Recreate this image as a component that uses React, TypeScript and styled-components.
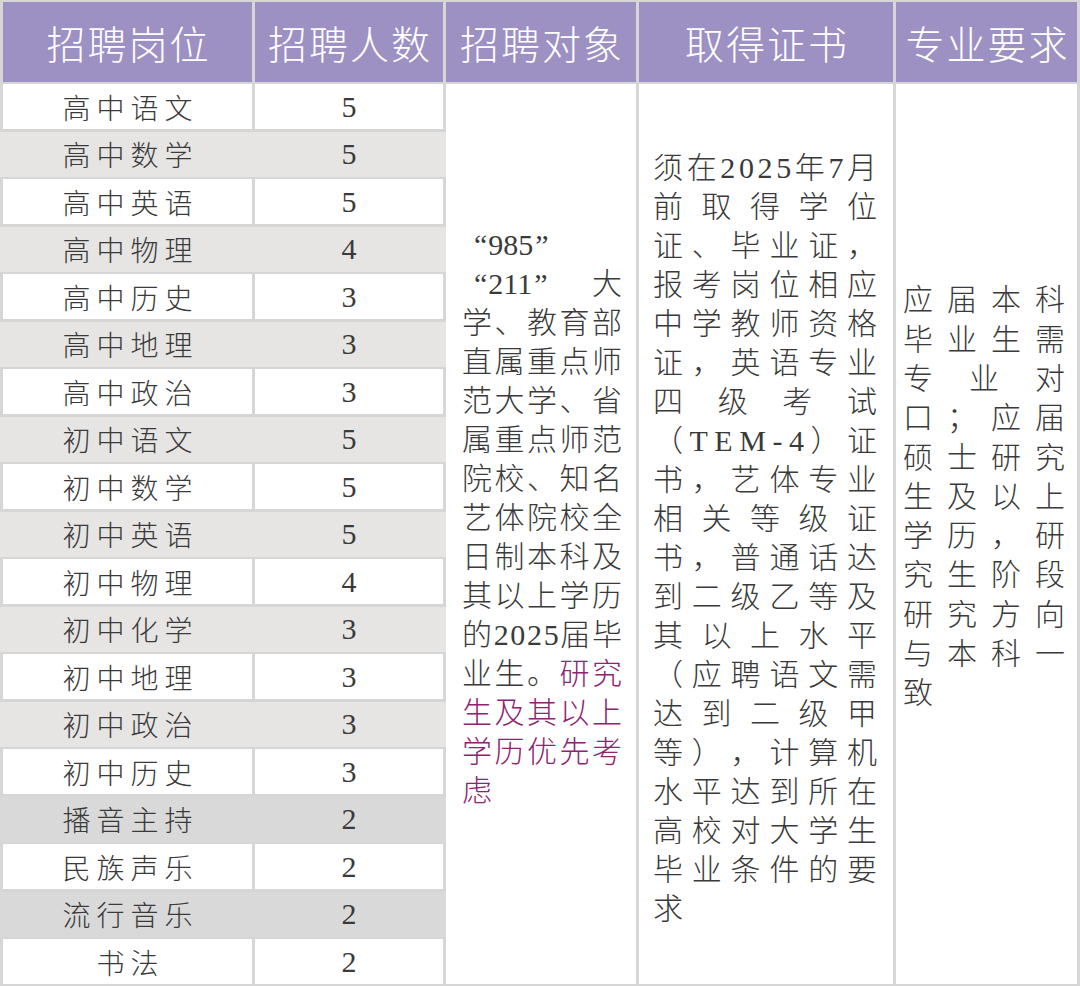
import type { ReactNode } from "react";
import styled, { createGlobalStyle } from "styled-components";

const GlobalStyle = createGlobalStyle`
  *, *::before, *::after { box-sizing: border-box; }
  html, body { margin: 0; padding: 0; background: #ffffff; }
  body {
    font-family: "Liberation Serif", "Noto Sans CJK SC", serif;
    color: #3a3a3a;
  }
`

const COLS = [249, 188, 190, 254, 181]

const Sheet = styled.div`
    width: 1080px;
    height: 986px;
    background: #d6d6d6;
    display: flex;
    flex-direction: column;
`

const HeadRow = styled.div`
    display: flex;
    padding: 2px 0 2px 3px;
`

const HeadCell = styled.div<{ $w: number }>`
    width: ${({ $w }) => $w}px;
    height: 80px;
    margin-right: 3px;
    background: #9d91c4;
    color: #ffffff;
    display: flex;
    align-items: center;
    justify-content: center;
    padding-left: 2px;
    font-size: 39px;
    letter-spacing: 2px;
    font-weight: 300;
`

const Body = styled.div`
    flex: 1;
    display: flex;
    padding-bottom: 2px;
`

const PostList = styled.div`
    width: 446px;
    display: flex;
    flex-direction: column;
    gap: 2.4px;
`

const PostRow = styled.div<{ $shade?: string }>`
    flex: 1;
    display: flex;
    gap: 3px;
    padding: 0 3px;
    background: ${({ $shade }) => $shade ?? "transparent"};
`

const PostCell = styled.div<{ $w: number; $open: boolean }>`
    width: ${({ $w }) => $w}px;
    background: ${({ $open }) => ($open ? "#ffffff" : "transparent")};
    display: flex;
    align-items: center;
    justify-content: center;
    font-size: 28px;
    font-weight: 300;
    letter-spacing: 6px;
    padding-left: 6px;
`

const CountCell = styled(PostCell)`
    font-size: 30px;
    letter-spacing: 0;
    padding-left: 0;
`

const TallCell = styled.div<{ $w: number; $pad: string; $lh: number }>`
    width: ${({ $w }) => $w}px;
    margin-right: 3px;
    background: #ffffff;
    display: flex;
    flex-direction: column;
    justify-content: center;
    padding: ${({ $pad }) => $pad};
    font-size: 30px;
    font-weight: 300;
    line-height: ${({ $lh }) => $lh}px;
`

const Line = styled.div<{ $spread: boolean; $lh: number }>`
    height: ${({ $lh }) => $lh}px;
    display: flex;
    align-items: center;
    justify-content: ${({ $spread }) => ($spread ? "space-between" : "flex-start")};
    white-space: pre;
`

const Tok = styled.span<{ $accent?: boolean }>`
    color: ${({ $accent }) => ($accent ? "#8e2470" : "inherit")};
`

// the opening quote sits in a full-width slot, so it starts further in
const OpenQuote = styled.span`
    margin-left: 12px;
    margin-right: 1px;
`

const CloseQuote = styled.span`
    margin-left: 2px;
`

type Token = { t: ReactNode; accent?: boolean }
type TextLine = { tokens: Token[]; spread: boolean }

const chars = (s: string, accent = false): Token[] =>
    Array.from(s).map(t => ({ t, accent }))

const line = (s: string, spread = true): TextLine => ({ tokens: chars(s), spread })

const quoted = (s: string): ReactNode => (
    <>
        <OpenQuote>“</OpenQuote>{s}<CloseQuote>”</CloseQuote>
    </>
)

const posts: [string, number, string?][] = [
    ["高中语文", 5],
    ["高中数学", 5, "#e6e5e3"],
    ["高中英语", 5],
    ["高中物理", 4, "#e6e5e3"],
    ["高中历史", 3],
    ["高中地理", 3, "#e6e5e3"],
    ["高中政治", 3],
    ["初中语文", 5, "#e6e5e3"],
    ["初中数学", 5],
    ["初中英语", 5, "#e6e5e3"],
    ["初中物理", 4],
    ["初中化学", 3, "#e6e5e3"],
    ["初中地理", 3],
    ["初中政治", 3, "#e6e5e3"],
    ["初中历史", 3],
    ["播音主持", 2, "#d9d9d9"],
    ["民族声乐", 2],
    ["流行音乐", 2, "#d9d9d9"],
    ["书法", 2],
]

const targetLines: TextLine[] = [
    { tokens: [{ t: quoted("985") }], spread: false },
    { tokens: [{ t: quoted("211") }, { t: "大" }], spread: true },
    line("学、教育部"),
    line("直属重点师"),
    line("范大学、省"),
    line("属重点师范"),
    line("院校、知名"),
    line("艺体院校全"),
    line("日制本科及"),
    line("其以上学历"),
    line("的2025届毕"),
    { tokens: [...chars("业生。"), ...chars("研究", true)], spread: true },
    { tokens: chars("生及其以上", true), spread: true },
    { tokens: chars("学历优先考", true), spread: true },
    { tokens: chars("虑", true), spread: false },
]

const certLines: TextLine[] = [
    line("须在2025年7月"),
    line("前取得学位"),
    line("证、毕业证，"),
    line("报考岗位相应"),
    line("中学教师资格"),
    line("证，英语专业"),
    line("四级考试"),
    line("（TEM-4）证"),
    line("书，艺体专业"),
    line("相关等级证"),
    line("书，普通话达"),
    line("到二级乙等及"),
    line("其以上水平"),
    line("（应聘语文需"),
    line("达到二级甲"),
    line("等），计算机"),
    line("水平达到所在"),
    line("高校对大学生"),
    line("毕业条件的要"),
    line("求", false),
]

const majorLines: TextLine[] = [
    line("应届本科"),
    line("毕业生需"),
    line("专业对"),
    line("口；应届"),
    line("硕士研究"),
    line("生及以上"),
    line("学历，研"),
    line("究生阶段"),
    line("研究方向"),
    line("与本科一"),
    line("致", false),
]

const Paragraph = ({ lines, lh }: { lines: TextLine[]; lh: number }) => (
    <>
        {lines.map((l, i) => (
            <Line key={i} $spread={l.spread} $lh={lh}>
                {l.tokens.map((tk, j) => (
                    <Tok key={j} $accent={tk.accent}>{tk.t}</Tok>
                ))}
            </Line>
        ))}
    </>
)

const headers = ["招聘岗位", "招聘人数", "招聘对象", "取得证书", "专业要求"]

const App = () => {
    return (
        <>
            <GlobalStyle />
            <Sheet>
                <HeadRow>
                    {headers.map((h, i) => (
                        <HeadCell key={h} $w={COLS[i]}>{h}</HeadCell>
                    ))}
                </HeadRow>
                <Body>
                    <PostList>
                        {posts.map(([name, count, shade]) => (
                            <PostRow key={name} $shade={shade}>
                                <PostCell $w={COLS[0]} $open={!shade}>{name}</PostCell>
                                <CountCell $w={COLS[1]} $open={!shade}>{count}</CountCell>
                            </PostRow>
                        ))}
                    </PostList>
                    <TallCell $w={COLS[2]} $pad="0 14px 34px 16px" $lh={39}>
                        <Paragraph lines={targetLines} lh={39} />
                    </TallCell>
                    <TallCell $w={COLS[3]} $pad="7px 16px 0 14px" $lh={39}>
                        <Paragraph lines={certLines} lh={39} />
                    </TallCell>
                    <TallCell $w={COLS[4]} $pad="0 12px 75px 7px" $lh={39.3}>
                        <Paragraph lines={majorLines} lh={39.3} />
                    </TallCell>
                </Body>
            </Sheet>
        </>
    )
}

export default App;
